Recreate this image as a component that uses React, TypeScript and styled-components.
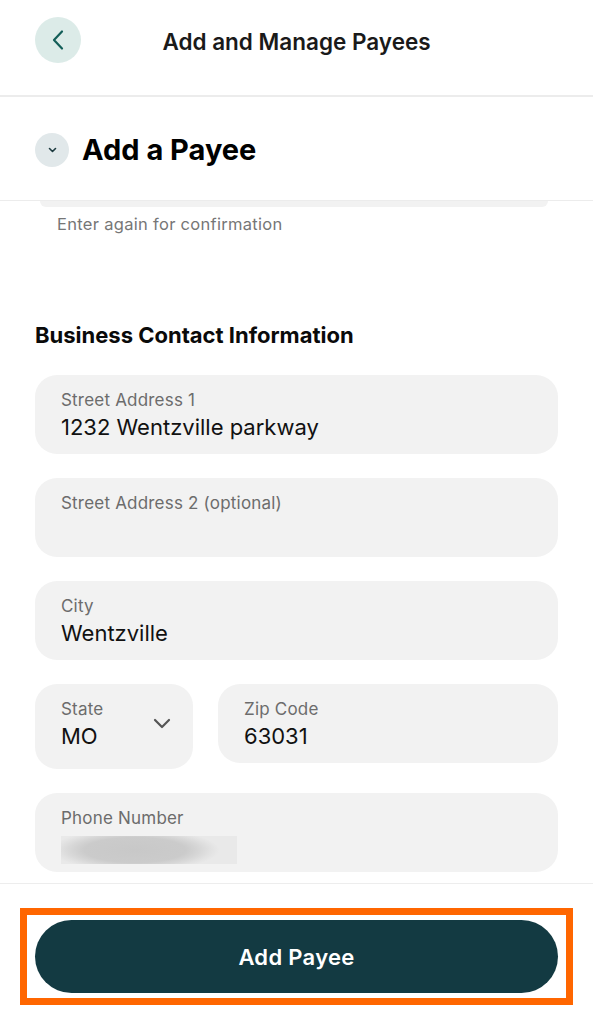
import React from "react";
import styled, { createGlobalStyle } from "styled-components";

const GlobalStyle = createGlobalStyle`
  html, body {
    margin: 0;
    padding: 0;
    background: #ffffff;
  }
  body {
    font-family: Inter, "Noto Sans", "Liberation Sans", sans-serif;
    color: #111111;
    -webkit-font-smoothing: antialiased;
  }
`;

const Page = styled.div`
  width: 593px;
  height: 1024px;
  display: flex;
  flex-direction: column;
  overflow: hidden;
  background: #ffffff;
`;

const TopBar = styled.header`
  height: 97px;
  flex-shrink: 0;
  display: flex;
  align-items: flex-start;
  padding: 17px 35px 0;
  box-sizing: border-box;
  border-bottom: 2px solid #ececec;
`;

const BackButton = styled.button`
  width: 46px;
  height: 46px;
  border-radius: 50%;
  border: none;
  padding: 0;
  background: #dcebe8;
  display: flex;
  align-items: center;
  justify-content: center;
  flex-shrink: 0;
`;

const TopTitle = styled.h1`
  margin: 0 46px 0 0;
  flex: 1;
  text-align: center;
  padding-top: 11px;
  font-size: 22.5px;
  line-height: 28px;
  font-weight: 600;
  color: #1a1a1a;
`;

const SectionHeader = styled.div`
  height: 104px;
  flex-shrink: 0;
  display: flex;
  align-items: center;
  gap: 13px;
  padding: 2px 35px 0;
  box-sizing: border-box;
  border-bottom: 1px solid #ececec;
`;

const ToggleCircle = styled.div`
  width: 34px;
  height: 34px;
  border-radius: 50%;
  background: #e1e8ea;
  display: flex;
  align-items: center;
  justify-content: center;
`;

const SectionTitle = styled.h2`
  margin: 0;
  font-size: 29px;
  line-height: 36px;
  font-weight: 700;
  color: #000000;
`;

const Scroll = styled.div`
  flex: 1;
  display: flex;
  flex-direction: column;
  padding: 0 35px;
  overflow: hidden;
`;

const PeekField = styled.div`
  height: 6px;
  flex-shrink: 0;
  margin: 0 10px 0 5px;
  background: #f2f2f2;
  border-radius: 0 0 20px 20px;
`;

const HelperText = styled.div`
  margin: 6px 0 0 22px;
  font-size: 16.5px;
  line-height: 22px;
  color: #767676;
  letter-spacing: 0.3px;
`;

const GroupTitle = styled.h3`
  margin: 86px 0 0;
  font-size: 22px;
  line-height: 28px;
  font-weight: 700;
  color: #0a0a0a;
`;

const Fields = styled.div`
  margin-top: 26px;
  display: flex;
  flex-direction: column;
  gap: 24px;
`;

const Row = styled.div`
  display: flex;
  align-items: flex-start;
  gap: 25px;
  flex-shrink: 0;
`;

const Field = styled.div<{ $width?: number; $tall?: boolean }>`
  position: relative;
  box-sizing: border-box;
  flex-shrink: 0;
  height: ${(p) => (p.$tall ? 85 : 79)}px;
  ${(p) => (p.$width ? `width: ${p.$width}px;` : "flex-grow: 1;")}
  background: #f2f2f2;
  border-radius: 22px;
  padding: 15px 26px 0;
`;

const Label = styled.div`
  font-size: 17px;
  line-height: 20px;
  color: #6c6c6c;
  letter-spacing: 0.2px;
`;

const Value = styled.div`
  margin-top: 4px;
  font-size: 22px;
  line-height: 27px;
  color: #111111;
`;

const Blurred = styled.div`
  margin-top: 8px;
  width: 176px;
  height: 28px;
  background: radial-gradient(
    ellipse 48% 75% at 42% 50%,
    #c8c8c8 0%,
    #cbcbcb 60%,
    #d8d8d8 78%,
    #e2e2e2 90%,
    #e9e9e9 100%
  );
`;

const SelectChevron = styled.div`
  position: absolute;
  right: 22px;
  top: 34px;
  display: flex;
`;

const Footer = styled.footer`
  flex-shrink: 0;
  height: 141px;
  box-sizing: border-box;
  border-top: 1px solid #ededed;
  padding: 24px 20px 0;
`;

const Highlight = styled.div`
  border: 7px solid #ff6600;
  padding: 5px 8px;
  height: 97px;
  box-sizing: border-box;
`;

const PrimaryButton = styled.button`
  width: 100%;
  height: 73px;
  border: none;
  border-radius: 37px;
  background: #133a42;
  color: #ffffff;
  font-family: inherit;
  font-size: 22px;
  font-weight: 600;
  letter-spacing: 0.3px;
`;

export default function App() {
  return (
    <Page>
      <GlobalStyle />
      <TopBar>
        <BackButton aria-label="Back">
          <svg width="14" height="22" viewBox="0 0 14 22" fill="none">
            <path
              d="M11 2.5L3 11l8 8.5"
              stroke="#135e58"
              strokeWidth="2.2"
              strokeLinecap="round"
              strokeLinejoin="round"
            />
          </svg>
        </BackButton>
        <TopTitle>Add and Manage Payees</TopTitle>
      </TopBar>
      <SectionHeader>
        <ToggleCircle>
          <svg width="9" height="6" viewBox="0 0 9 6" fill="none">
            <path
              d="M1.5 1.5L4.5 4.5 7.5 1.5"
              stroke="#1d3b40"
              strokeWidth="1.6"
              strokeLinecap="round"
              strokeLinejoin="round"
            />
          </svg>
        </ToggleCircle>
        <SectionTitle>Add a Payee</SectionTitle>
      </SectionHeader>
      <Scroll>
        <PeekField />
        <HelperText>Enter again for confirmation</HelperText>
        <GroupTitle>Business Contact Information</GroupTitle>
        <Fields>
          <Field>
            <Label>Street Address 1</Label>
            <Value>1232 Wentzville parkway</Value>
          </Field>
          <Field>
            <Label>Street Address 2 (optional)</Label>
          </Field>
          <Field>
            <Label>City</Label>
            <Value>Wentzville</Value>
          </Field>
          <Row>
            <Field $width={158} $tall>
              <Label>State</Label>
              <Value>MO</Value>
              <SelectChevron>
                <svg width="18" height="11" viewBox="0 0 18 11" fill="none">
                  <path
                    d="M2 2l7 7 7-7"
                    stroke="#555555"
                    strokeWidth="2.2"
                    strokeLinecap="round"
                    strokeLinejoin="round"
                  />
                </svg>
              </SelectChevron>
            </Field>
            <Field>
              <Label>Zip Code</Label>
              <Value>63031</Value>
            </Field>
          </Row>
          <Field>
            <Label>Phone Number</Label>
            <Blurred />
          </Field>
        </Fields>
      </Scroll>
      <Footer>
        <Highlight>
          <PrimaryButton>Add Payee</PrimaryButton>
        </Highlight>
      </Footer>
    </Page>
  );
}
